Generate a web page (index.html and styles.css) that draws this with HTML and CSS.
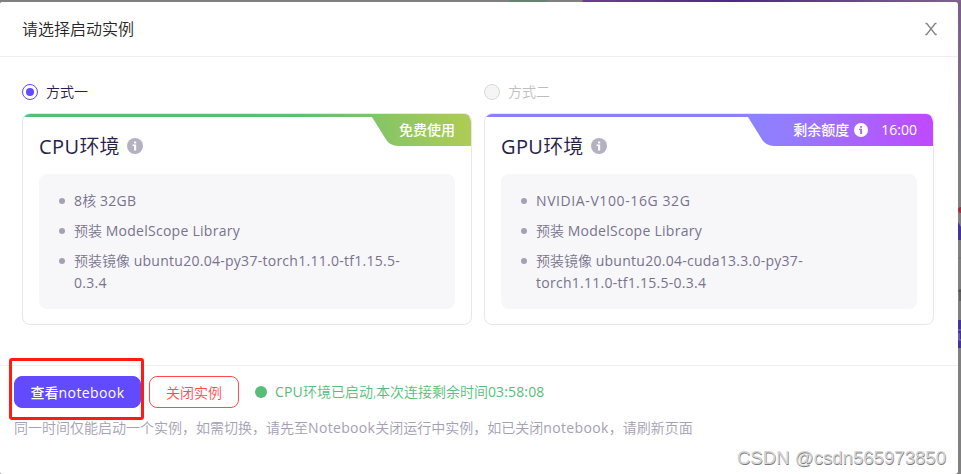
FILE: index.html
```html
<!DOCTYPE html>
<html lang="zh-CN">

<head>
    <meta charset="UTF-8">
    <meta name="viewport" content="width=device-width, initial-scale=1.0">
    <title>请选择启动实例</title>
    <link rel="stylesheet" href="styles.css">
</head>

<body>
    <!-- page behind the dialog -->
    <svg class="backdrop" width="961" height="474" viewBox="0 0 961 474">
        <defs>
            <linearGradient id="banner" x1="583" x2="961" y1="0" y2="0" gradientUnits="userSpaceOnUse">
                <stop offset="0" stop-color="#6a4090" />
                <stop offset="0.4" stop-color="#4b2a86" />
                <stop offset="1" stop-color="#7f638c" />
            </linearGradient>
            <linearGradient id="side" x1="0" x2="0" y1="0" y2="160" gradientUnits="userSpaceOnUse">
                <stop offset="0" stop-color="#7b5c8c" />
                <stop offset="1" stop-color="#7e7f82" />
            </linearGradient>
        </defs>
        <rect width="961" height="474" fill="#808080" />
        <path d="M511 0h37l-1 2h-38z" fill="#688272" />
        <path d="M583 0h378v2H582z" fill="url(#banner)" />
        <rect x="958" y="2" width="3" height="158" fill="url(#side)" />
        <circle cx="961" cy="210" r="3" fill="#a12d3c" />
        <path d="M958 222l3 5v13h-3z" fill="#45329a" />
        <path d="M958 258h3" stroke="#727272" />
        <path d="M958 291h3M960 289v12" stroke="#444" />
        <rect x="958" y="320" width="3" height="28" fill="#45329a" />
        <path d="M958 330h3M959 333v7h2" fill="none" stroke="#8a82b5" />
    </svg>

    <div class="modal">
        <div class="modal-header">
            <h1>请选择启动实例</h1>
            <svg class="close" width="14" height="14" viewBox="0 0 14 14">
                <path d="M1.500 1.500h1.300l8.600 11h1.300M12.500 1.500h-1.300l-8.600 11H1.300" />
            </svg>
        </div>

        <div class="modal-body">
            <div class="option">
                <label class="radio checked"><span class="circle"></span>方式一</label>
                <div class="card cpu">
                    <div class="strip"></div>
                    <div class="tag">
                        <svg width="99" height="32" viewBox="0 0 99 32">
                            <defs>
                                <linearGradient id="green" x1="0" x2="1" y1="0" y2="0">
                                    <stop offset="0" stop-color="#82c567" />
                                    <stop offset="1" stop-color="#b0cb57" />
                                </linearGradient>
                            </defs>
                            <path d="M0 3V0h91a8 8 0 0 1 8 8v24H26q-8 0-12-6.500z" fill="url(#green)" />
                        </svg>
                        <span class="tag-text">免费使用</span>
                    </div>
                    <div class="card-title">
                        <h2><span class="en">CPU</span>环境</h2>
                        <svg class="info" width="16" height="16" viewBox="0 0 16 16">
                            <circle cx="8" cy="8" r="8" />
                            <path d="M7 3.500h2.200v2H7zM5.600 6.500h3.600v6H7V8H5.600z" />
                        </svg>
                    </div>
                    <ul class="specs">
                        <li><span class="en">8</span>核 <span class="en">32GB</span></li>
                        <li>预装 <span class="en">ModelScope Library</span></li>
                        <li>预装镜像 <span class="en">ubuntu20.04-py37-torch1.11.0-tf1.15.5-<br>0.3.4</span></li>
                    </ul>
                </div>
            </div>

            <div class="option">
                <label class="radio disabled"><span class="circle"></span>方式二</label>
                <div class="card gpu">
                    <div class="strip"></div>
                    <div class="tag">
                        <svg width="185" height="32" viewBox="0 0 185 32">
                            <defs>
                                <linearGradient id="purple" x1="0" x2="1" y1="0" y2="0">
                                    <stop offset="0" stop-color="#8b83ff" />
                                    <stop offset="0.25" stop-color="#957aff" />
                                    <stop offset="1" stop-color="#bf49ff" />
                                </linearGradient>
                            </defs>
                            <path d="M0 3V0h177a8 8 0 0 1 8 8v24H26q-8 0-12-6.500z" fill="url(#purple)" />
                        </svg>
                        <span class="tag-text">剩余额度
                            <svg class="info light" width="14" height="14" viewBox="0 0 16 16">
                                <circle cx="8" cy="8" r="8" />
                                <path d="M7 3.500h2.200v2H7zM5.600 6.500h3.600v6H7V8H5.600z" />
                            </svg>
                            <span class="en">16:00</span>
                        </span>
                    </div>
                    <div class="card-title">
                        <h2><span class="en">GPU</span>环境</h2>
                        <svg class="info" width="16" height="16" viewBox="0 0 16 16">
                            <circle cx="8" cy="8" r="8" />
                            <path d="M7 3.500h2.200v2H7zM5.600 6.500h3.600v6H7V8H5.600z" />
                        </svg>
                    </div>
                    <ul class="specs">
                        <li><span class="en caps">NVIDIA-V100-16G 32G</span></li>
                        <li>预装 <span class="en">ModelScope Library</span></li>
                        <li>预装镜像 <span class="en">ubuntu20.04-cuda13.3.0-py37-<br>torch1.11.0-tf1.15.5-0.3.4</span></li>
                    </ul>
                </div>
            </div>
        </div>

        <div class="modal-footer">
            <div class="actions">
                <button class="btn primary">查看<span class="en">notebook</span></button>
                <button class="btn danger">关闭实例</button>
                <span class="dot"></span>
                <span class="status"><span class="en">CPU</span>环境已启动,本次连接剩余时间<span class="en">03:58:08</span></span>
            </div>
            <p class="note">同一时间仅能启动一个实例，如需切换，请先至<span class="en">Notebook</span>关闭运行中实例，如已关闭<span class="en">notebook</span>，请刷新页面</p>
        </div>
    </div>

    <div class="highlight"></div>
    <div class="watermark">CSDN @csdn565973850</div>
</body>

</html>
```

FILE: styles.css
```css
* {
    box-sizing: border-box;
}

body {
    margin: 0;
    width: 961px;
    height: 474px;
    overflow: hidden;
    position: relative;
    padding-top: 2px;
    background-color: #808080;
    font-family: "Open Sans", "Noto Sans CJK SC", sans-serif;
    font-size: 14px;
    font-weight: 350;
    line-height: 22px;
    color: #26214a;
}

h1,
h2,
p,
ul {
    margin: 0;
    padding: 0;
    font-weight: inherit;
}

.en {
    font-weight: 400;
}

.backdrop {
    position: absolute;
    top: 0;
    left: 0;
    z-index: -1;
}

.modal {
    width: 958px;
    height: 472px;
    background-color: #fff;
    border-radius: 2px 3px 3px 2px;
}

/* Header */
.modal-header {
    height: 55px;
    padding: 0 20px 0 22px;
    border-bottom: 1px solid #efefef;
    display: flex;
    align-items: center;
    justify-content: space-between;
}

.modal-header h1 {
    font-size: 16px;
    color: #262626;
}

.close path {
    fill: none;
    stroke: #858585;
    stroke-width: 1.3;
}

/* Options */
.modal-body {
    display: flex;
    gap: 12px;
    height: 308px;
    padding: 24px 22px 0;
}

.option {
    width: 450px;
}

.radio {
    display: flex;
    align-items: center;
    gap: 8px;
    margin-bottom: 10px;
}

.circle {
    width: 16px;
    height: 16px;
    border: 1px solid #d9d9d9;
    border-radius: 50%;
    background-color: #f5f5f5;
    display: flex;
    align-items: center;
    justify-content: center;
}

.checked .circle {
    border-color: #624aff;
    background-color: #fff;
}

.checked .circle::after {
    content: "";
    width: 8px;
    height: 8px;
    border-radius: 50%;
    background-color: #624aff;
}

.disabled {
    color: #bfbfbf;
}

.card {
    position: relative;
    height: 212px;
    padding: 17px 16px 0;
    border: 1px solid #e7e6ed;
    border-radius: 8px;
    overflow: hidden;
}

.strip {
    position: absolute;
    top: 0;
    left: 0;
    right: 0;
    height: 3px;
}

.cpu .strip {
    background: linear-gradient(90deg, #58bd78 0%, #5cbe75 60%, #8bc764 85%);
}

.gpu .strip {
    background-color: #8b80ff;
}

.tag {
    position: absolute;
    top: 0;
    right: 0;
    height: 32px;
}

.tag-text {
    position: absolute;
    top: 0;
    right: 16px;
    height: 32px;
    display: flex;
    align-items: center;
    color: #fff;
    font-weight: 500;
    white-space: nowrap;
}

.tag-text .en {
    font-weight: 500;
}

.info {
    fill: #b4b2c2;
}

.info path {
    fill: #fff;
}

.light {
    fill: #fff;
    margin: 0 13px 0 5px;
}

.light path {
    fill: #a66aff;
}

.card-title {
    display: flex;
    align-items: center;
    gap: 8px;
    height: 32px;
}

.card-title h2 {
    font-size: 20px;
    line-height: 32px;
}

.card-title .en {
    letter-spacing: 0.4px;
}

.card-title .info {
    margin-bottom: 2px;
}

.specs {
    height: 135px;
    margin-top: 11px;
    padding: 16px 20px 0 35px;
    border-radius: 8px;
    background-color: #f7f7f9;
    color: #77738f;
    list-style: none;
}

.specs li {
    margin-bottom: 8px;
}

.specs li::before {
    content: "";
    float: left;
    width: 6px;
    height: 6px;
    margin: 8px 0 0 -15px;
    border-radius: 50%;
    background-color: #a4a1b5;
}

.specs .en {
    letter-spacing: 0.27px;
}

.specs .caps {
    letter-spacing: 0.6px;
}

/* Footer */
.modal-footer {
    padding: 10px 14px 0;
    border-top: 1px solid #efefef;
}

.actions {
    display: flex;
    align-items: center;
}

.btn {
    height: 32px;
    padding: 0;
    border-radius: 8px;
    border: 1px solid #624aff;
    font: inherit;
    line-height: 32px;
    white-space: nowrap;
}

.primary {
    width: 127px;
    background-color: #624aff;
    color: #fff;
    font-weight: 500;
}

.primary .en {
    font-weight: 500;
    letter-spacing: 0.4px;
}

.danger {
    width: 90px;
    margin-left: 8px;
    background-color: #fff;
    border-color: #ff4d4f;
    color: #ff4d4f;
}

.dot {
    width: 12px;
    height: 12px;
    margin: 0 8px 0 16px;
    border-radius: 50%;
    background-color: #58bd78;
}

.status {
    color: #58bd78;
}

.status .en {
    letter-spacing: 0.15px;
}

.note {
    margin-top: 9px;
    color: #a4a1b5;
    white-space: nowrap;
}

.note .en {
    letter-spacing: 0.34px;
}

/* Red frame around the notebook button */
.highlight {
    position: absolute;
    left: 9px;
    top: 358px;
    width: 135px;
    height: 62px;
    border: 3px solid #ff1c12;
    border-radius: 3px;
}

.watermark {
    position: absolute;
    right: 15px;
    bottom: 5px;
    font-family: "Liberation Sans", sans-serif;
    font-size: 18.6px;
    font-weight: 400;
    color: #d4d4d4;
    text-shadow: 0.5px 0.5px 0 #7c7c7c;
}
```
